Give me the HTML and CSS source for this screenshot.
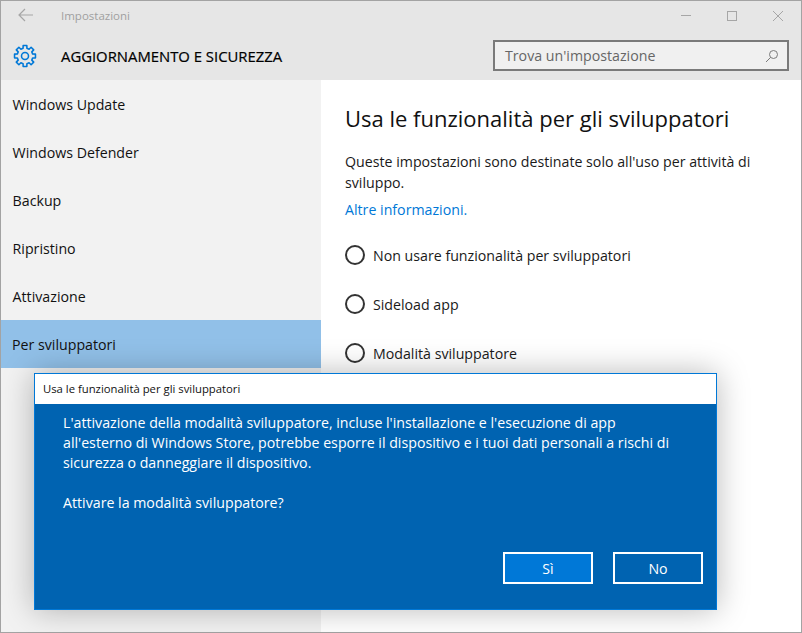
FILE: index.html
```html
<!DOCTYPE html>
<html lang="it">
<head>
<meta charset="utf-8">
<title>Impostazioni</title>
<link rel="stylesheet" href="styles.css">
</head>
<body>
<div class="window">
  <header class="head">
    <div class="titlebar">
      <svg class="back" width="16" height="14" viewBox="0 0 16 14"><path d="M7 1 1 7l6 6M1 7h14" fill="none" stroke="#a6a6a6" stroke-width="1.2"/></svg>
      <span class="apptitle">Impostazioni</span>
      <div class="winbtns">
        <svg width="12" height="12" viewBox="0 0 12 12"><path d="M1 5.5h10" stroke="#a6a6a6" fill="none"/></svg>
        <svg width="12" height="12" viewBox="0 0 12 12"><rect x="1.5" y="1.5" width="9" height="9" stroke="#a6a6a6" fill="none"/></svg>
        <svg width="12" height="12" viewBox="0 0 12 12"><path d="M1 1l10 10M11 1 1 11" stroke="#a6a6a6" fill="none"/></svg>
      </div>
    </div>
    <div class="sectionbar">
      <svg class="gear" width="24" height="24" viewBox="0 0 26 26"><path d="M10.92 4.66 11 1.67h4l.08 2.99 2.35.97 2.17-2.05 2.82 2.82-2.05 2.17.97 2.35 2.99.08v4l-2.99.08-.97 2.35 2.05 2.17-2.82 2.82-2.17-2.05-2.35.97-.08 2.99h-4l-.08-2.99-2.35-.97-2.17 2.05-2.82-2.82 2.05-2.17-.97-2.35-2.99-.08v-4l2.99-.08.97-2.35-2.05-2.17 2.82-2.82 2.17 2.05z" fill="none" stroke="#0078d7" stroke-width="1.7" stroke-linejoin="round"/><circle cx="13" cy="13" r="3.8" fill="none" stroke="#0078d7" stroke-width="1.7"/></svg>
      <h1 class="section">AGGIORNAMENTO E SICUREZZA</h1>
      <div class="search">
        <span class="placeholder">Trova un'impostazione</span>
        <svg width="14" height="14" viewBox="0 0 14 14"><circle cx="8.5" cy="5.5" r="4" fill="none" stroke="#7a7a7a"/><path d="M5.6 8.4 1 13" stroke="#7a7a7a" fill="none"/></svg>
      </div>
    </div>
  </header>
  <div class="main">
    <nav class="side">
      <div class="item">Windows Update</div>
      <div class="item">Windows Defender</div>
      <div class="item">Backup</div>
      <div class="item">Ripristino</div>
      <div class="item">Attivazione</div>
      <div class="item selected">Per sviluppatori</div>
    </nav>
    <section class="content">
      <h2 class="heading">Usa le funzionalità per gli sviluppatori</h2>
      <p class="desc">Queste impostazioni sono destinate solo all'uso per attività di sviluppo.</p>
      <a class="link">Altre informazioni.</a>
      <div class="radios">
        <div class="radio"><span class="dot"></span>Non usare funzionalità per sviluppatori</div>
        <div class="radio"><span class="dot"></span>Sideload app</div>
        <div class="radio"><span class="dot"></span>Modalità sviluppatore</div>
      </div>
    </section>
  </div>
  <div class="dialog">
    <div class="dlgtitle">Usa le funzionalità per gli sviluppatori</div>
    <div class="dlgbody">
      <p class="dlgtext">L'attivazione della modalità sviluppatore, incluse l'installazione e l'esecuzione di app all'esterno di Windows Store, potrebbe esporre il dispositivo e i tuoi dati personali a rischi di sicurezza o danneggiare il dispositivo.</p>
      <p class="dlgtext">Attivare la modalità sviluppatore?</p>
      <div class="dlgbtns">
        <button class="btn primary">Sì</button>
        <button class="btn">No</button>
      </div>
    </div>
  </div>
</div>
</body>
</html>
```
FILE: styles.css
```css
* { box-sizing: border-box; }
html, body { margin: 0; height: 100%; }
body { font-family: "Open Sans", "Noto Sans", sans-serif; font-size: 14.2px; color: #1a1a1a; overflow: hidden; }
.window { position: relative; width: 802px; height: 633px; border: 1px solid #a3a3a3; background: #fff; display: flex; flex-direction: column; }
.head { background: #e6e6e6; height: 79px; flex: none; }
.titlebar { height: 30px; display: flex; align-items: center; padding: 0 0 2px 17px; }
.back { margin-right: 27px; }
.apptitle { font-size: 11.5px; color: #a0a0a0; }
.winbtns { margin-left: auto; margin-top: 2px; display: flex; gap: 34px; padding-right: 17px; }
.sectionbar { height: 49px; display: flex; align-items: center; padding-left: 12px; }
.gear { margin-right: 24px; }
.section { margin: 0; font-size: 14.85px; font-weight: 400; color: #000; -webkit-text-stroke: .2px #000; }
.search { margin-left: auto; margin-right: 12px; width: 296px; height: 31px; border: 2px solid #7a7a7a; background: #f0f0f0; display: flex; align-items: center; justify-content: space-between; padding: 0 8px 0 10px; color: #666; }
.placeholder { font-size: 14.2px; }
.main { flex: 1; display: flex; min-height: 0; }
.side { width: 320px; background: #f2f2f2; flex: none; }
.item { height: 48px; display: flex; align-items: center; padding-left: 11.6px; font-size: 14.2px; color: #111; }
.selected { background: #91c0e8; padding-left: 11px; }
.content { padding: 23px 24px 0; flex: 1; }
.heading { margin: 0 0 18px; font-size: 22px; line-height: 30px; font-weight: 400; color: #111; }
.desc { margin: 0; font-size: 14.2px; line-height: 21px; width: 440px; }
.link { display: block; font-size: 14.2px; line-height: 21px; margin-top: 6px; color: #0078d7; }
.radios { margin-top: 25px; display: flex; flex-direction: column; gap: 29px; }
.radio { display: flex; align-items: center; height: 20px; font-size: 14.2px; gap: 8px; }
.dot { width: 20px; height: 20px; border: 2px solid #333; border-radius: 50%; }
.dialog { position: absolute; left: 33px; top: 372px; width: 683px; height: 237px; border: 1px solid #0078d7; background: #0063b1; box-shadow: 0 0 30px rgba(0,0,0,.28); display: flex; flex-direction: column; }
.dlgtitle { height: 30px; background: #fff; font-size: 11.3px; line-height: 29px; padding-left: 8px; color: #111; }
.dlgbody { flex: 1; padding: 0 28px 0 28px; color: #fff; display: flex; flex-direction: column; }
.dlgtext { margin: 0; max-width: 620px; font-size: 14.2px; line-height: 20px; }
.dlgtext:first-child { margin-top: 9px; margin-bottom: 20px; }
.dlgbtns { margin-top: auto; margin-bottom: 25px; display: flex; justify-content: flex-end; gap: 20px; margin-right: -15px; }
.btn { width: 90px; height: 32px; border: 2px solid #fff; background: transparent; color: #fff; font: 14.2px "Open Sans", "Noto Sans", sans-serif; padding: 0; }
.primary { background: #0078d7; }
```
